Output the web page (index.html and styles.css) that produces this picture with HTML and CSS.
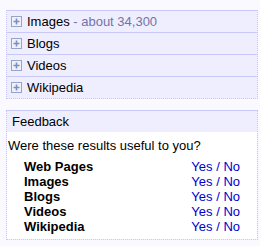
FILE: index.html
```html
<!DOCTYPE html>
<html lang="en">
<head>
    <meta charset="UTF-8">
    <title>Results</title>
    <link rel="stylesheet" href="styles.css">
</head>
<body>
<div class="panel">
    <!-- collapsed result groups -->
    <div class="group">
        <svg class="plus" width="11" height="11" viewBox="0 0 11 11"><rect x="0.5" y="0.5" width="10" height="10" fill="#eef0fa" stroke="#97a4c8"/><path d="M5.5 2.5v6M2.5 5.5h6" stroke="#7d8fc0" stroke-width="1.6"/></svg>
        <span>Images</span><span class="count">&nbsp;- about 34,300</span>
    </div>
    <div class="group">
        <svg class="plus" width="11" height="11" viewBox="0 0 11 11"><rect x="0.5" y="0.5" width="10" height="10" fill="#eef0fa" stroke="#97a4c8"/><path d="M5.5 2.5v6M2.5 5.5h6" stroke="#7d8fc0" stroke-width="1.6"/></svg>
        <span>Blogs</span>
    </div>
    <div class="group">
        <svg class="plus" width="11" height="11" viewBox="0 0 11 11"><rect x="0.5" y="0.5" width="10" height="10" fill="#eef0fa" stroke="#97a4c8"/><path d="M5.5 2.5v6M2.5 5.5h6" stroke="#7d8fc0" stroke-width="1.6"/></svg>
        <span>Videos</span>
    </div>
    <div class="group">
        <svg class="plus" width="11" height="11" viewBox="0 0 11 11"><rect x="0.5" y="0.5" width="10" height="10" fill="#eef0fa" stroke="#97a4c8"/><path d="M5.5 2.5v6M2.5 5.5h6" stroke="#7d8fc0" stroke-width="1.6"/></svg>
        <span>Wikipedia</span>
    </div>
</div>

<!-- feedback box -->
<div class="panel feedback">
    <div class="fb-head">Feedback</div>
    <div class="fb-body">
        <div class="question">Were these results useful to you?</div>
        <div class="votes">
            <b>Web Pages</b><span class="vote"><a href="#">Yes</a> / <a href="#">No</a></span>
            <b>Images</b><span class="vote"><a href="#">Yes</a> / <a href="#">No</a></span>
            <b>Blogs</b><span class="vote"><a href="#">Yes</a> / <a href="#">No</a></span>
            <b>Videos</b><span class="vote"><a href="#">Yes</a> / <a href="#">No</a></span>
            <b>Wikipedia</b><span class="vote"><a href="#">Yes</a> / <a href="#">No</a></span>
        </div>
    </div>
</div>
</body>
</html>
```

FILE: styles.css
```css
body {
    font-family: "Liberation Sans", Arial, sans-serif;
    font-size: 13px;
    color: #000;
    background-color: #f9f9ff;
    margin: 0;
    padding: 10px 2px 0 6px;
}
.panel {
    border-top: 1px solid #c9c9f9;
    border-left: 1px dotted #c9c9f9;
    border-right: 1px dotted #c9c9f9;
    border-bottom: 1px dotted #c9c9f9;
    background-color: #eeeeff;
}
.group {
    display: flex;
    align-items: center;
    height: 21px;
    padding-left: 4px;
}
.group + .group {
    border-top: 1px solid #c9c9f9;
}
.plus {
    margin-right: 5px;
    flex-shrink: 0;
}
.count {
    color: #7373aa;
}
.feedback {
    margin-top: 11px;
}
.fb-head {
    height: 21px;
    line-height: 21px;
    padding-left: 5px;
}
.fb-body {
    background-color: #fff;
    padding: 6px 0 5px 1px;
}
.question {
    line-height: 15px;
}
.votes {
    display: grid;
    grid-template-columns: 1fr auto;
    line-height: 15px;
    margin: 6px 17px 0 16px;
}
.vote {
    color: #0000cc;
}
.vote a {
    color: #0000cc;
    text-decoration: none;
}
```
